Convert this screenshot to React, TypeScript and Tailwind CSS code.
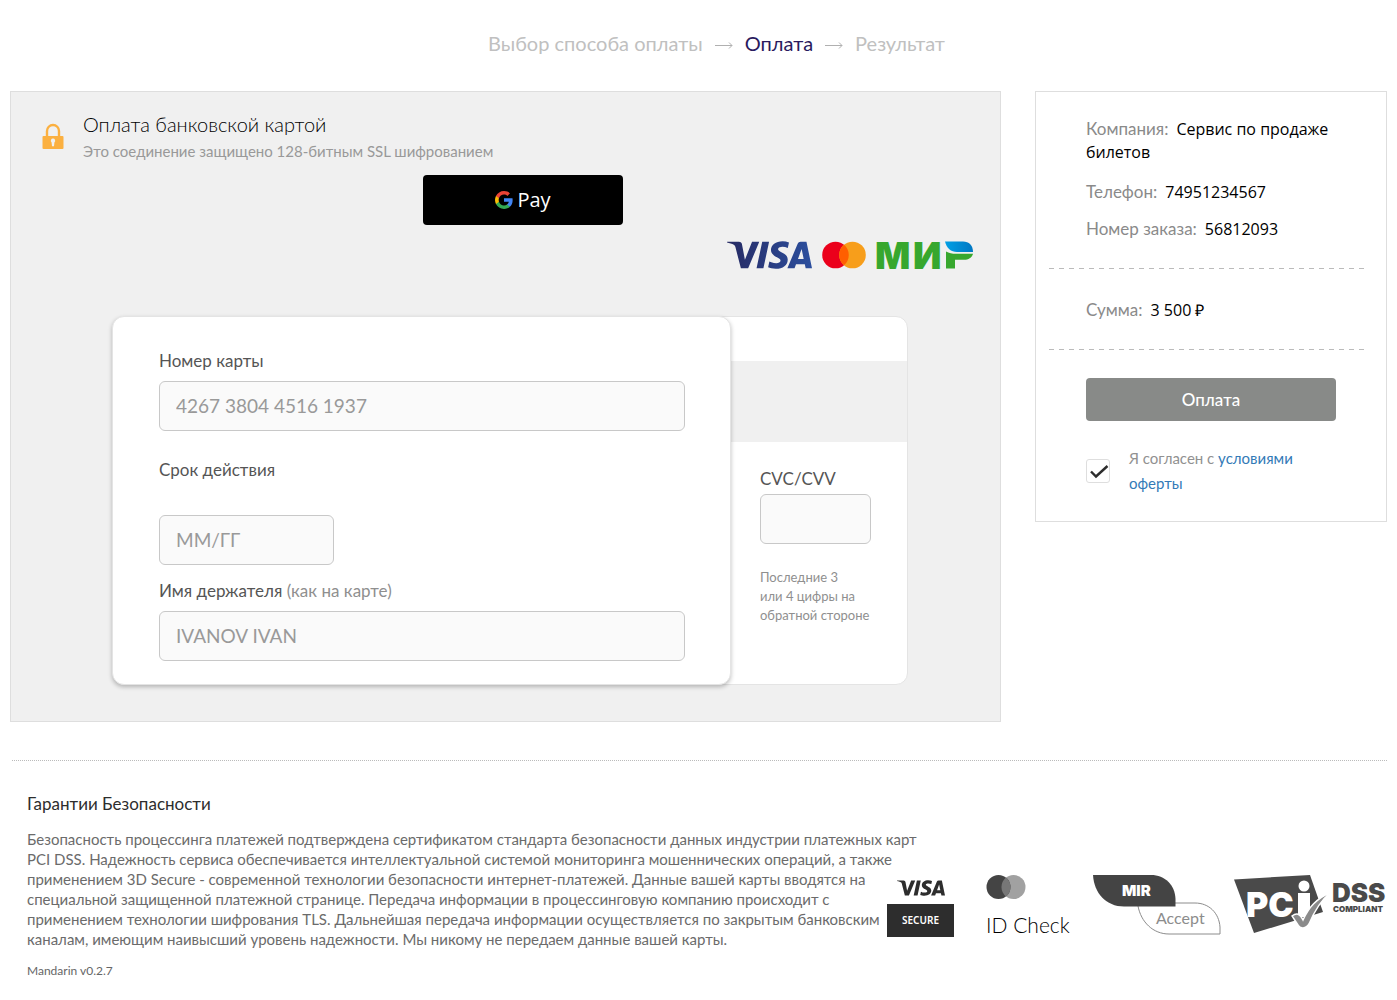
import React, { useState } from 'react';
import { SiVisa } from 'react-icons/si';

/* ---------- Logos ---------- */

const LockIcon: React.FC = () => (
  <svg viewBox="0 0 22 27" className="h-[27px] w-[22px]" aria-hidden="true">
    <path d="M5 14V8a6 6 0 0 1 12 0v6" fill="none" stroke="#fbb040" strokeWidth="2.4" />
    <rect x="0.5" y="13" width="21" height="13" rx="1" fill="#fbb040" />
    <path d="M11 15.600a2.200 2.200 0 0 1 1.400 3.900l-.4 3.700h-2l-.4-3.700A2.200 2.200 0 0 1 11 15.600z" fill="#f0f0f0" />
  </svg>
);

const GoogleMark: React.FC = () => (
  <svg viewBox="1 1 22 22" className="h-[18px] w-[18px]" aria-hidden="true">
    <path fill="#4285f4" d="M22.56 12.25c0-.78-.07-1.53-.2-2.25H12v4.26h5.92c-.26 1.37-1.04 2.53-2.21 3.31v2.77h3.57c2.08-1.92 3.28-4.74 3.28-8.09z" />
    <path fill="#34a853" d="M12 23c2.97 0 5.46-.98 7.28-2.66l-3.57-2.77c-.98.66-2.23 1.06-3.71 1.06-2.86 0-5.29-1.93-6.16-4.53H2.18v2.84C3.99 20.53 7.7 23 12 23z" />
    <path fill="#fbbc04" d="M5.84 14.09c-.22-.66-.35-1.36-.35-2.09s.13-1.43.35-2.09V7.07H2.18C1.43 8.55 1 10.22 1 12s.43 3.45 1.18 4.93l3.66-2.84z" />
    <path fill="#ea4335" d="M12 5.38c1.62 0 3.06.56 4.21 1.64l3.15-3.15C17.45 2.09 14.97 1 12 1 7.7 1 3.99 3.47 2.18 7.07l3.66 2.84c.87-2.6 3.3-4.53 6.16-4.53z" />
  </svg>
);

const VisaLogo: React.FC = () => (
  <div>
    <svg className="absolute h-0 w-0" aria-hidden="true">
      <linearGradient id="visa" x1="0" x2="1" y1="0" y2="0">
        <stop offset="0" stopColor="#262a63" />
        <stop offset="1" stopColor="#2c4f9e" />
      </linearGradient>
    </svg>
    <SiVisa viewBox="0 8.1 24 7.8" fill="url(#visa)" className="h-7 w-[85px]" aria-label="Visa" />
  </div>
);

const MastercardLogo: React.FC = () => (
  <svg viewBox="0 0 44 28" className="h-7 w-11" role="img" aria-label="Mastercard">
    <circle cx="13.5" cy="14" r="13.3" fill="#eb001b" />
    <circle cx="30.5" cy="14" r="13.3" fill="#f79e1b" />
    <path d="M22 3.8a13.3 13.3 0 0 1 0 20.4 13.3 13.3 0 0 1 0-20.4z" fill="#ff5f00" />
  </svg>
);

const MirLogo: React.FC = () => (
  <svg viewBox="0 0 98 28" className="h-7 w-[98px] overflow-visible" role="img" aria-label="МИР">
    <defs>
      <linearGradient id="mir" x1="0" x2="1" y1="0" y2="0">
        <stop offset="0" stopColor="#00a0e5" />
        <stop offset="1" stopColor="#0077c3" />
      </linearGradient>
    </defs>
    <text y="27.500" fill="#37a72e" fontFamily="Inter, sans-serif" fontSize="37" fontWeight="900">
      <tspan x="-1">М</tspan>
      <tspan x="37">И</tspan>
    </text>
    <path d="M69 .5h18c6 0 10 4 10 10.500H81C75 11 70.500 7 69 .5z" fill="url(#mir)" />
    <path d="M70 10.500c3 1.700 6 2.300 10 2.300h17c-1 4-4.500 6-9 6h-9v8.700h-9z" fill="#37a72e" />
  </svg>
);

const VisaSecureLogo: React.FC = () => (
  <div className="w-[67px]">
    <SiVisa viewBox="0 8.1 24 7.8" fill="#2d2d2d" className="mx-auto h-4 w-12" aria-label="Visa" />
    <div className="mt-2 flex h-[33px] items-center justify-center bg-[#2d2d2d] font-['Noto_Sans',sans-serif] text-[10px] font-semibold text-white">
      SECURE
    </div>
  </div>
);

const IdCheckLogo: React.FC = () => (
  <div className="w-[88px]">
    <svg viewBox="0 0 40 24" className="h-6 w-10" role="img" aria-label="Mastercard">
      <circle cx="27.500" cy="12" r="12" fill="#a1a1a1" />
      <circle cx="12.500" cy="12" r="12" fill="#444" />
      <path d="M20 2.600a12 12 0 0 1 0 18.800 12 12 0 0 1 0-18.800z" fill="#777" />
    </svg>
    <div className="mt-4 text-[21px] leading-5 font-light whitespace-nowrap text-black">ID Check</div>
  </div>
);

const MirAcceptLogo: React.FC = () => (
  <svg viewBox="0 0 128 60" className="h-[60px] w-32" role="img" aria-label="MIR Accept">
    <path d="M45 31c3 16 15 28 31 28h51V52c-1-14-11-24-25-24H80" fill="#fff" stroke="#8c8c8c" />
    <path d="M0 0h58c14 0 24 10 24.500 24v7.500H31C13 31.500 1 18 0 0z" fill="#444" />
    <text x="29" y="20.500" fill="#fff" fontFamily="Inter, sans-serif" fontSize="15" fontWeight="900">MIR</text>
    <text x="63" y="49" fill="#8c8c8c" fontFamily="Lato, sans-serif" fontSize="16">Accept</text>
  </svg>
);

const PciLogo: React.FC = () => (
  <svg viewBox="0 0 153 60" className="h-[60px] w-[153px] overflow-visible" role="img" aria-label="PCI DSS Compliant">
    <path d="M0 4.500 76 0 89 37 20 58z" fill="#4a4a4a" />
    <text x="12" y="42" fill="#fff" fontFamily="Inter, sans-serif" fontSize="34" fontWeight="900">PC</text>
    <path d="M64 18h12v24H64z" fill="#fff" />
    <circle cx="70" cy="11" r="5.500" fill="#fff" />
    <path d="M58 41c5-4 8-2 11 4 6-13 13-21 28-28-11 9-17 20-22 32-3 5-9 5-11 1z" fill="#8a8a8a" stroke="#fff" strokeWidth="1.500" />
    <text x="98" y="27" fill="#4a4a4a" fontFamily="Inter, sans-serif" fontSize="26" fontWeight="900">DSS</text>
    <text x="99" y="37" fill="#4a4a4a" fontFamily="Inter, sans-serif" fontSize="8" fontWeight="900">COMPLIANT</text>
  </svg>
);

/* ---------- Building blocks ---------- */

interface FieldProps {
  id: string;
  label: React.ReactNode;
  placeholder?: string;
  labelClass: string;
  inputClass: string;
}

const Field: React.FC<FieldProps> = ({ id, label, placeholder, labelClass, inputClass }) => (
  <div>
    <label htmlFor={id} className={`block text-[17px] leading-6 text-[#555] ${labelClass}`}>{label}</label>
    <input
      id={id}
      placeholder={placeholder}
      className={`block h-[50px] rounded-md border border-[#c8c8c8] bg-[#fafafa] px-4 pb-0.5 text-[19px] placeholder:text-[#999] ${inputClass}`}
    />
  </div>
);

const InfoRow: React.FC<{ label: string; value: string }> = ({ label, value }) => (
  <div className="px-[50px] text-[17px] leading-[23px]">
    <dt className="mr-2 inline text-[#8a8a8a]">{label}</dt>
    <dd className="inline font-['Open_Sans',sans-serif] text-base leading-none text-black">{value}</dd>
  </div>
);

const Divider: React.FC = () => (
  <div className="mr-5 ml-[13px] h-px bg-[linear-gradient(to_right,#bbb_50%,transparent_50%)] bg-[length:10px_1px]" />
);

/* ---------- Sections ---------- */

const StepArrow: React.FC = () => (
  <svg viewBox="0 0 18 9" className="mt-1 h-[9px] w-[18px]" fill="none" stroke="#b0b0b0" aria-hidden="true">
    <path d="M0 4.500h17M14 1.500l3 3-3 3" />
  </svg>
);

const Steps: React.FC = () => (
  <nav className="flex items-center justify-center gap-3 pt-[31px] pb-[35px] pl-9 text-xl leading-[25px] text-[#c0c0c0]">
    <span>Выбор способа оплаты</span>
    <StepArrow />
    <span className="text-[#2a1a5e]">Оплата</span>
    <StepArrow />
    <span>Результат</span>
  </nav>
);

const CardForm: React.FC = () => (
  <div className="flex justify-center pl-[9px]">
    <div className="relative z-10 w-[619px] rounded-xl border border-[#e4e4e4] bg-white pt-8 pr-[45px] pb-[23px] pl-[46px] shadow-[0_2px_4px_rgba(0,0,0,0.25)]">
      <Field id="pan" label="Номер карты" placeholder="4267 3804 4516 1937" labelClass="mb-2" inputClass="w-full" />
      <div className="mt-[27px]">
        <Field id="expiry" label="Срок действия" placeholder="ММ/ГГ" labelClass="mb-[33px]" inputClass="w-[175px]" />
      </div>
      <div className="mt-[14px]">
        <Field
          id="holder"
          label={<>Имя держателя <span className="text-[#8f8f8f]">(как на карте)</span></>}
          placeholder="IVANOV IVAN"
          labelClass="mb-2"
          inputClass="w-full"
        />
      </div>
    </div>
    <div className="-ml-3 w-[189px] rounded-r-xl border border-[#e4e4e4] bg-white pt-11">
      <div className="h-[81px] bg-[#f0f0f0]" />
      <div className="pt-[25px] pl-10">
        <Field id="cvc" label="CVC/CVV" labelClass="mb-[3px]" inputClass="w-[111px]" />
        <p className="mt-6 text-[13px] leading-[19px] text-[#8f8f8f]">
          Последние 3<br />или 4 цифры на<br />обратной стороне
        </p>
      </div>
    </div>
  </div>
);

const PaymentPanel: React.FC = () => (
  <section className="flex-1 border border-[#dedede] bg-[#f0f0f0] pb-9">
    <div className="flex gap-[19px] pt-[18px] pl-[31px]">
      <div className="pt-[13px]"><LockIcon /></div>
      <div>
        <h1 className="text-xl leading-7 font-light text-black">Оплата банковской картой</h1>
        <p className="text-[15px] leading-[26px] text-[#999]">Это соединение защищено 128-битным SSL шифрованием</p>
      </div>
    </div>
    <div className="flex justify-center pt-[11px] pl-[35px]">
      <button type="button" className="flex h-[50px] w-[200px] items-center justify-center gap-1 rounded bg-black text-white">
        <GoogleMark />
        <span className="font-['Open_Sans',sans-serif] text-xl">Pay</span>
      </button>
    </div>
    <div className="flex items-center justify-end gap-[10px] pt-4 pr-[26px] pb-[47px]">
      <VisaLogo />
      <MastercardLogo />
      <MirLogo />
    </div>
    <CardForm />
  </section>
);

const OrderSummary: React.FC = () => {
  const [agreed, setAgreed] = useState(true);

  return (
    <aside className="w-[352px] shrink-0 border border-[#dedede] pt-[25px] pb-[25px]">
      <dl>
        <InfoRow label="Компания:" value="Сервис по продаже билетов" />
        <div className="mt-[17px]"><InfoRow label="Телефон:" value="74951234567" /></div>
        <div className="mt-[14px] mb-7"><InfoRow label="Номер заказа:" value="56812093" /></div>
        <Divider />
        <div className="mt-[29px] mb-7"><InfoRow label="Сумма:" value="3 500 ₽" /></div>
        <Divider />
      </dl>
      <div className="px-[50px] pt-7">
        <button type="button" className="h-[43px] w-full rounded bg-[#888a88] text-[17px] font-medium text-white">Оплата</button>
        <div className="mt-[25px] flex items-start">
          <span className="relative mt-[13px] mr-[19px] h-6 w-6">
            <input
              id="agree"
              type="checkbox"
              checked={agreed}
              onChange={(e) => setAgreed(e.target.checked)}
              className="block h-6 w-6 appearance-none rounded-[3px] border border-[#dedede] bg-white"
            />
            {agreed && (
              <svg viewBox="0 0 24 24" className="pointer-events-none absolute inset-0" fill="none" stroke="#2d2d2d" strokeWidth="2.4" aria-hidden="true">
                <path d="M5 12.500l5 5L21.500 7" />
              </svg>
            )}
          </span>
          <label htmlFor="agree" className="flex-1 text-[15px] leading-[25px] text-[#919191]">
            Я согласен с <a href="#offer" className="text-[#337ab7]">условиями оферты</a>
          </label>
        </div>
      </div>
    </aside>
  );
};

const Footer: React.FC = () => (
  <footer className="mt-[38px] ml-0.5 border-t border-dotted border-[#bbb] pt-[31px] pl-[15px]">
    <h2 className="text-[17px] leading-6 text-[#2d2d2d]">Гарантии Безопасности</h2>
    <div className="mt-[13px] flex items-end">
      <p className="min-w-0 flex-1 text-[15px] leading-5 whitespace-nowrap text-[#6b6b6b]">
        Безопасность процессинга платежей подтверждена сертификатом стандарта безопасности данных индустрии платежных карт<br />
        PCI DSS. Надежность сервиса обеспечивается интеллектуальной системой мониторинга мошеннических операций, а также<br />
        применением 3D Secure - современной технологии безопасности интернет-платежей. Данные вашей карты вводятся на<br />
        специальной защищенной платежной странице. Передача информации в процессинговую компанию происходит с<br />
        применением технологии шифрования TLS. Дальнейшая передача информации осуществляется по закрытым банковским<br />
        каналам, имеющим наивысший уровень надежности. Мы никому не передаем данные вашей карты.
      </p>
      <div className="flex shrink-0 items-start pb-3">
        <div className="pt-[5px]"><VisaSecureLogo /></div>
        <div className="ml-8"><IdCheckLogo /></div>
        <div className="ml-[19px]"><MirAcceptLogo /></div>
        <div className="ml-[13px]"><PciLogo /></div>
      </div>
    </div>
    <p className="mt-[13px] text-xs leading-[18px] text-[#666]">Mandarin v0.2.7</p>
  </footer>
);

export default function App() {
  return (
    <div className="bg-white px-[10px] font-[Lato,sans-serif]">
      <Steps />
      <main className="flex items-start gap-[34px]">
        <PaymentPanel />
        <OrderSummary />
      </main>
      <Footer />
    </div>
  );
}
